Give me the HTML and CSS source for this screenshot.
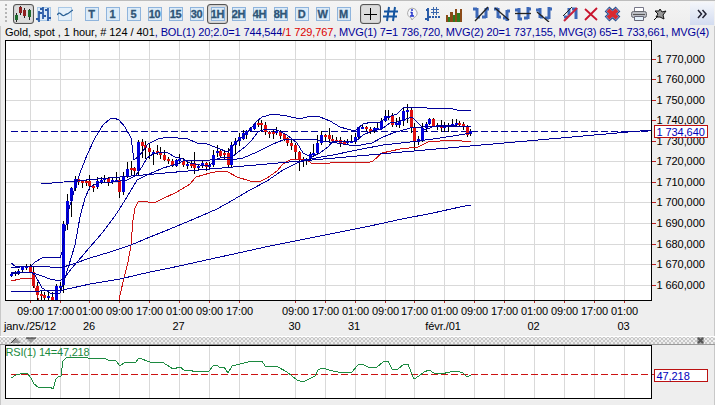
FILE: index.html
```html
<!DOCTYPE html>
<html lang="fr">
<head>
    <meta charset="UTF-8">
    <meta name="viewport" content="width=device-width, initial-scale=1.0">
    <title>Gold, spot</title>
    <link rel="stylesheet" href="styles.css">
</head>
<body>
    <div class="toolbar">
        <span class="grip"></span>
        <div class="group">
            <button class="btn active"><svg width="16" height="16"><path d="M1.5 7v9M5.5 0v9M9.5 2v10M14.5 3v11" stroke="#222"/><path d="M0 9h3v5H0z" fill="#1c6b2c"/><path d="M4 1h3v6H4zM8 4h3v6H8z" fill="#8e1f1f"/><path d="M13 4h3v7h-3z" fill="#1c6b2c"/></svg></button>
            <button class="btn"><svg width="16" height="16"><rect x="1.5" y="1.5" width="13" height="13" fill="#dcebf8" stroke="#a9c8e6"/><path d="M3 5v11M0 13h3M3 7h3M7 1v12M4 3h3M7 10h3M12 2v13M9 4h3M12 12h3" stroke="#2b5ca8" stroke-width="1.800" fill="none"/></svg></button>
            <button class="btn"><svg width="16" height="16"><rect x="1.5" y="1.5" width="13" height="13" fill="#e4f0fa" stroke="#a9c8e6"/><path d="M0 9c2-3 3-2 5 0s3-1 5-1 3-3 6-4" stroke="#2c6296" stroke-width="1.3" fill="none"/></svg></button>
        </div>
        <div class="group">
            <button class="btn"><span class="key">T</span></button>
            <button class="btn"><span class="key">1</span></button>
            <button class="btn"><span class="key">5</span></button>
            <button class="btn"><span class="key">10</span></button>
            <button class="btn"><span class="key">15</span></button>
            <button class="btn"><span class="key">30</span></button>
            <button class="btn active"><span class="key">1H</span></button>
            <button class="btn"><span class="key">2H</span></button>
            <button class="btn"><span class="key">4H</span></button>
            <button class="btn"><span class="key">8H</span></button>
            <button class="btn"><span class="key">D</span></button>
            <button class="btn"><span class="key">W</span></button>
            <button class="btn"><span class="key">M</span></button>
        </div>
        <div class="group">
            <button class="btn active"><svg width="16" height="16"><path d="M8.5 2v12M2 8.5h13" stroke="#000"/></svg></button>
            <button class="btn"><svg width="16" height="16"><path d="M6 1L4 15M12 1l-2 14M1 5.500h14M0 10.500h14" stroke="#1555a0" stroke-width="2"/></svg></button>
            <button class="btn"><svg width="16" height="16"><path d="M8 2a5.500 5 0 0 1 2 9.500L8 14l-1-2.300A5 5 0 0 1 8 2z" fill="#f5f6fa" stroke="#aaa"/><path d="M8 3v2M8 6v4M6.500 6.500h1.500M6 10h4" stroke="#2233cc" stroke-width="1.500" fill="none"/></svg></button>
            <button class="btn"><svg width="16" height="16"><path d="M3 2v13M0 13h3M1 4h2" stroke="#2b5ca8" stroke-width="2"/><path d="M8.500 1v8M11.500 1v8M6 3.500h8M6 6.500h8" stroke="#3a67ac"/><path d="M4 11h12" stroke="#2b5ca8" stroke-width="2" stroke-dasharray="2 1"/></svg></button>
            <button class="btn"><svg width="17" height="16"><path d="M0 9h2v7H0zM4 6h3v10H4zM9 3h2v13H9zM14 3h2v13h-2z" fill="#8b4a18"/><path d="M2 11h2v5H2zM7 9h2v7H7zM11 7h3v9h-3z" fill="#2e7b20"/></svg></button>
        </div>
        <div class="group">
            <button class="btn"><svg width="16" height="16"><path d="M4 2v10M0 3h4M4 11h3M13 2v10M9 11h4M13 3h3" stroke="#3c68b8" stroke-width="3"/><path d="M2 15L15 1" stroke="#222" stroke-width="1.300"/></svg></button>
            <button class="btn"><svg width="16" height="16"><path d="M4 2v10M0 3h4M4 11h3M13 4v11M9 12h4M13 5h3" stroke="#3c68b8" stroke-width="3"/><path d="M1 2l14 12" stroke="#222" stroke-width="1.300"/></svg></button>
            <button class="btn"><svg width="16" height="16"><path d="M4 2v12M0 4h4M4 13h3M13 1v12M9 12h4M13 3h3" stroke="#3c68b8" stroke-width="3"/><path d="M0 7.500h16" stroke="#222" stroke-width="1.300"/></svg></button>
            <button class="btn"><svg width="16" height="16"><path d="M4 2v10M0 4h4M4 11h3M13 1v12M9 12h4M13 3h3" stroke="#3c68b8" stroke-width="3"/><path d="M1 6l12 10" stroke="#222" stroke-width="1.300"/></svg></button>
        </div>
        <div class="group">
            <button class="btn"><svg width="16" height="16"><path d="M2 11h4M7 2v7M14 2v11M10 3h4" stroke="#3c68b8" stroke-width="3"/><path d="M1 10l9-9" stroke="#222"/><path d="M2 15L15 2" stroke="#c8203c" stroke-width="2"/></svg></button>
            <button class="btn"><svg width="16" height="16"><path d="M2 3l12 11M14 2L2 14" stroke="#c8142c" stroke-width="1.800"/></svg></button>
            <button class="btn"><svg width="17" height="16"><path d="M3 3l11 10M14 3L3 13" stroke="#244a88" stroke-width="7"/><path d="M3.500 3.500l10 9M13.500 3.500l-10 9" stroke="#7da0d4" stroke-width="5"/><path d="M4 4l9 8M13 4l-9 8" stroke="#d92a30" stroke-width="4"/></svg></button>
        </div>
        <div class="group">
            <button class="btn"><svg width="16" height="16"><path d="M3.500 1.500h9v5h-9z" fill="#fff" stroke="#778"/><rect x=".5" y="5.500" width="15" height="6" rx="2" fill="#b9bcc2" stroke="#666a70"/><path d="M2 8.500h12" stroke="#555"/><path d="M3.500 10.500h9v4h-9z" fill="#e4f2fa" stroke="#667"/></svg></button>
            <button class="btn"><svg width="16" height="16"><path d="M8 3l2 3 4-1-3 4 1 4-4-2-4 0 2-3-3-3 4 0z" fill="#999" stroke="#111"/><path d="M6 10l-4 4" stroke="#111"/></svg></button>
        </div>
        <button class="more"><svg width="10" height="10"><path d="M1 1l3.500 4L1 9M5.500 1L9 5 5.500 9" stroke="#223" stroke-width="1.500" fill="none"/></svg></button>
    </div>

    <div class="legend">
        <span class="instrument">Gold, spot , 1 hour, # 124 / 401</span>
        <span class="bol">, BOL(1) 20;2.0=1 744,544</span>
        <span class="bol-low">/1 729,767</span>
        <span class="mvg1">, MVG(1) 7=1 736,720</span>
        <span class="mvg2">, MVG(2) 20=1 737,155</span>
        <span class="mvg3">, MVG(3) 65=1 733,661</span>
        <span class="mvg4">, MVG(4)</span>
    </div>

    <svg class="price-chart" id="price" width="715" height="296" viewBox="0 40 715 296">
        <defs><clipPath id="plot"><rect x="6" y="41" width="645" height="259"/></clipPath></defs>
    </svg>

    <div class="splitter">
        <svg class="arrows" width="30" height="8"><path d="M0 6l5-5 5 5z" fill="#999"/><path d="M0 6l5-5" stroke="#444"/><path d="M15 1h10l-5 5z" fill="#999"/><path d="M15 1h10" stroke="#333"/></svg>
        <svg class="close" width="7" height="7"><rect width="7" height="7" fill="#aaa"/><path d="M1 1l5 5M6 1L1 6" stroke="#555" stroke-width="2"/></svg>
    </div>

    <svg class="rsi-chart" id="rsi" width="715" height="60" viewBox="0 345 715 60"></svg>

    <script src="script.js"></script>
</body>
</html>
```
FILE: styles.css
```css
body{
    margin: 0;
    width: 715px;
    height: 405px;
    overflow: hidden;
    box-sizing: border-box;
    background: #eeeeee;
    font-family: "Liberation Sans", Arial, sans-serif;
    font-size: 11px;
    color: #000;
    box-shadow: inset 1px 0 #c8c8c8, inset -1px 0 #c8c8c8;
}

.toolbar{
    display: flex;
    align-items: center;
    height: 26px;
    box-sizing: border-box;
    border-top: 1px solid #bdbdbd;
    padding: 0 1px 0 5px;
    background: linear-gradient(#f4f4f4, #eeeeee);
}
.grip{
    width: 2px;
    height: 20px;
    margin-right: 5.5px;
    background: repeating-linear-gradient(#b5b5b5 0 2px, transparent 2px 4px);
}
.group{
    display: flex;
    margin-right: 5.5px;
}
.btn{
    display: flex;
    align-items: center;
    justify-content: center;
    width: 21px;
    height: 20px;
    padding: 0;
    border: 1px solid transparent;
    background: none;
}
.btn svg{
    flex: none;
}
.btn.active{
    border: 1px solid #555;
    border-radius: 3px;
    background: #dcdcdc;
    box-shadow: inset 0 0 1px #666;
}
.key{
    display: flex;
    justify-content: center;
    width: 12px;
    height: 12px;
    border: 1px solid #8fb4dc;
    background: #dcebf8;
    color: #2f5577;
    font-size: 11px;
    font-weight: bold;
    line-height: 13px;
    letter-spacing: -0.3px;
    -webkit-text-stroke: 0.3px #2f5577;
}
.more{
    display: flex;
    align-items: center;
    justify-content: center;
    width: 24px;
    height: 23px;
    margin-left: auto;
    padding: 0;
    border: 0;
    background: linear-gradient(#f4f6fb, #d3dcf0);
}

.legend{
    display: flex;
    height: 14px;
    padding-left: 5px;
    line-height: 13px;
    white-space: pre;
    letter-spacing: -0.12px;
    color: #000099;
}
.instrument{
    color: #000;
    letter-spacing: -0.04px;
}
.bol-low{
    color: #dd0000;
}

svg{
    display: block;
}
svg text{
    font-size: 11px;
    letter-spacing: -0.08px;
}

.splitter{
    display: flex;
    align-items: center;
    justify-content: space-between;
    height: 9px;
    box-sizing: border-box;
    padding: 0 11px;
    border-top: 1px solid #fff;
    border-bottom: 1px solid #999;
    background-color: #eee;
    background-image: radial-gradient(circle, #999 0.6px, transparent 0.8px), radial-gradient(circle, #999 0.6px, transparent 0.8px);
    background-size: 4px 4px;
    background-position: 0 0, 2px 2px;
}
.axis{
    fill: none;
    stroke: #000;
}
.grid{
    fill: none;
    stroke: #d9d9d9;
}
.tick{
    stroke: #bb2222;
}
.line{
    fill: none;
    stroke: #000099;
}
.line.red{
    stroke: #cc1111;
}
.line.green{
    stroke: #1c8a40;
}
.dash{
    stroke-dasharray: 7 3;
}
.tag{
    fill: #fff;
    stroke: #bb1111;
}
.tag-text{
    fill: #0000bb;
}
.rsi-text{
    fill: #1c8a40;
    letter-spacing: -0.2px;
}
.up{
    fill: #0000dd;
}
.down{
    fill: #e01010;
}
```
FILE: script.js
```js
const NS = 'http://www.w3.org/2000/svg';
const price = document.getElementById('price');
const rsi = document.getElementById('rsi');

const columns = [30, 60, 89, 119, 149, 179, 209, 239, 295, 325, 355, 385, 414, 444, 474, 504, 534, 564, 594, 624];
const hours = ['09:00', '17:00', '01:00'];
const rows = [59, 79, 100, 120, 141, 161, 182, 202, 223, 244, 264, 285];

// x, high, low, body top, body bottom, u = up / d = down
const candles = `11 272 277 274 275 u,15 271 276 272 274 u,18 269 275 271 274 u,22 266 272 267 270 u,26 264 270 266 268 u,
30 264 272 266 272 d,33 267 288 272 286 d,37 282 300 286 295 d,41 291 300 294 296 d,44 292 300 295 298 d,48 292 300 296 297 u,52 292 300 297 300 d,
56 284 300 286 300 u,60 282 292 286 287 u,63 221 293 224 285 u,67 194 230 201 224 u,71 187 217 188 201 u,75 176 191 179 188 u,
78 178 185 179 182 d,82 180 188 181 182 d,86 180 186 181 182 d,89 175 190 181 186 d,93 184 192 186 187 d,97 177 189 181 187 u,
101 177 184 180 181 u,104 175 183 178 180 u,108 177 186 178 182 d,112 178 184 180 182 u,116 172 182 180 181 u,119 178 198 180 192 d,
123 172 195 176 192 u,127 162 178 169 176 u,131 161 175 168 170 d,134 167 175 168 171 d,138 140 175 142 171 u,142 139 158 142 146 d,
145 141 159 145 148 d,149 143 159 148 152 d,153 150 165 152 153 u,157 145 155 151 153 d,160 147 159 152 155 d,164 150 161 155 160 d,
168 157 164 159 161 d,172 159 167 161 166 d,176 159 167 160 166 u,179 154 164 159 161 u,183 158 167 161 165 d,187 161 169 164 165 u,
191 161 168 164 165 d,194 152 174 163 168 d,198 164 170 166 167 u,202 161 168 163 166 u,206 162 171 163 167 d,209 162 169 165 167 u,
213 150 167 155 165 u,217 145 157 151 153 u,220 149 157 151 156 d,224 150 159 153 154 d,228 148 167 153 165 d,231 142 168 145 165 u,
235 138 155 141 145 u,239 133 146 137 141 u,243 130 140 133 139 u,246 130 139 131 135 u,250 127 132 128 131 u,254 123 130 124 129 u,
258 119 127 123 124 d,261 120 132 123 125 d,265 122 135 125 132 d,269 131 138 132 133 d,273 130 139 132 134 d,276 127 135 131 133 u,
280 130 139 132 136 d,284 133 141 134 139 d,287 137 146 138 143 d,291 140 150 143 146 d,295 143 160 145 152 d,299 151 171 152 160 d,
303 157 167 159 160 u,306 158 165 159 160 u,310 152 161 154 159 u,313 144 157 153 154 u,317 135 155 143 153 u,321 131 145 135 143 u,
325 134 142 135 136 d,329 128 143 135 139 d,332 135 143 139 140 d,336 137 143 140 141 d,340 137 147 140 143 d,344 140 145 142 143 d,
347 139 145 141 143 u,351 135 143 141 142 u,355 133 144 137 142 u,358 127 140 127 137 u,362 125 129 127 128 u,366 126 131 127 129 d,
370 127 134 129 132 d,374 127 133 128 130 u,377 123 130 128 129 u,381 118 130 121 129 u,385 110 122 116 121 u,388 110 120 116 117 u,
392 113 127 115 125 d,396 118 127 123 125 u,399 117 128 121 125 u,403 108 126 111 121 u,407 104 123 110 111 u,411 107 133 110 127 d,
414 123 150 127 142 d,418 136 145 139 142 u,422 123 142 128 140 u,426 122 132 124 128 u,429 118 125 119 124 u,433 118 127 119 126 d,
437 123 130 125 126 u,441 120 132 126 128 d,444 122 132 126 127 u,448 123 132 125 127 u,452 119 127 124 125 u,456 119 127 123 125 u,
459 121 127 123 124 d,463 122 130 124 126 d,467 125 137 126 135 d,470 129 136 131 134 u`.split(',');

const lines = {
    upperBand: '11,263 15,266 30,267 35,262 42,258 48,257 60,258 62,252 64,238 68,212 75,188 80,173 87,155 95,138 103,125 110,119 114,118 119,120 125,127 131,138 134,160 140,155 148,144 158,139 168,137 178,138 188,139 197,143 205,143 217,148 228,152 235,143 247,133 257,121 262,117 273,114 287,116 300,119 310,116 320,117 330,121 340,127 347,129 355,131 363,124 372,122 380,122 388,117 397,114 403,108 413,107 427,108 453,109 461,111 466,110 471,111',
    mvg7: '11,274 30,272 35,275 42,288 52,294 60,293 65,278 75,245 80,217 85,198 90,187 100,182 113,182 127,180 135,176 142,167 147,158 153,154 162,152 168,153 175,157 183,159 190,163 200,165 210,165 215,160 222,157 232,157 237,153 245,147 252,140 258,132 265,129 277,130 287,135 297,143 303,153 311,157 320,153 328,147 333,141 347,141 355,142 363,135 372,131 382,129 390,123 397,122 403,120 412,117 417,122 425,130 432,127 440,125 471,127',
    mvg20: '11,272 33,273 42,276 50,279 60,281 65,277 72,268 90,247 103,232 117,213 130,192 137,180 147,175 163,168 177,164 183,161 210,160 237,159 243,158 257,152 273,144 283,140 293,139 310,139 330,142 343,144 355,146 372,143 383,137 393,133 410,128 423,127 437,126 471,127',
    mvg65: '11,268 20,267 40,266 60,268 73,264 90,258 110,252 131,245 150,237 170,229 194,219 217,209 233,200 250,190 267,181 283,170 297,163 310,159 333,155 357,150 383,145 410,142 433,139 453,136 471,133',
    mvg4: '11,292 40,291 63,290 90,284 120,279 150,272 170,268 220,257 270,246 320,236 370,226 402,219 433,213 460,207 471,205',
    trend: '41,184 651,130'
};
const lowerBand = '11,281 20,279 32,278 35,288 40,305 117,305 119,300 123,282 128,262 131,245 133,220 135,208 138,202 142,201 148,202 156,202 162,199 177,192 190,184 196,177 210,173 220,171 228,172 237,177 250,181 259,182 267,178 277,171 283,164 290,160 300,159 308,161 313,164 330,163 350,162 367,163 373,161 382,153 400,149 418,147 428,142 453,140 471,142';
const rsiLine = '11,378 16,375 24,373 27,373 31,378 34,384 38,387 50,387 53,389 56,379 58,377 61,376 63,361 66,358 72,357 86,357 90,359 104,358 108,360 116,361 120,366 125,362 135,363 139,358 150,362 162,362 167,365 173,369 180,367 184,370 190,370 195,372 202,371 209,371 213,366 216,365 221,368 224,367 228,373 232,366 240,364 252,361 262,361 265,366 278,367 287,372 297,380 303,382 309,379 315,376 318,370 322,368 333,371 343,373 352,372 358,365 362,364 370,368 377,367 383,362 388,361 392,369 398,369 404,364 408,364 411,372 414,379 419,376 424,372 429,370 434,373 441,374 450,372 457,371 463,373 467,377 471,375';

function add(parent, tag, attrs, text){
    const el = document.createElementNS(NS, tag);
    for(const key in attrs){
        el.setAttribute(key, attrs[key]);
    }
    if(text) el.textContent = text;
    parent.appendChild(el);
    return el;
}

function drawPrice(){
    add(price, 'rect', {x: 6, y: 41, width: 645, height: 259, fill: '#fff'});
    const plot = add(price, 'g', {'clip-path': 'url(#plot)', 'shape-rendering': 'crispEdges'});
    columns.forEach(x => add(plot, 'path', {d: `M${x + .5} 41V300`, class: 'grid'}));
    rows.forEach(y => add(plot, 'path', {d: `M6 ${y + .5}H651`, class: 'grid'}));
    add(plot, 'path', {d: 'M11 131.5H648', class: 'line dash'});

    candles.forEach(row => {
        const [x, high, low, top, bottom, dir] = row.trim().split(' ');
        add(plot, 'rect', {x: x, y: high, width: 1, height: low - high});
        add(plot, 'rect', {x: x - 1, y: top, width: 3, height: Math.max(bottom - top, 2), class: dir == 'u' ? 'up' : 'down'});
    });
    add(plot, 'polyline', {points: lowerBand, class: 'line red'});
    for(const name in lines){
        add(plot, 'polyline', {points: lines[name], class: 'line'});
    }

    add(price, 'rect', {x: 5.5, y: 40.5, width: 646, height: 260, class: 'axis'});
    rows.forEach((y, i) => {
        add(price, 'path', {d: `M652 ${y + .5}h4`, class: 'tick'});
        add(price, 'text', {x: 656.5, y: y + 4}, `1 ${770 - i * 10},000`);
    });
    columns.forEach((x, i) => {
        add(price, 'path', {d: `M${x + .5} 301v2`, class: 'tick'});
        // the weekend gap drops one 01:00 column
        add(price, 'text', {x: x + .5, y: 315, 'text-anchor': 'middle'}, hours[(i < 8 ? i : i + 1) % 3]);
    });
    [['janv./25/12', 30], ['26', 89], ['27', 178.5], ['30', 294.5], ['31', 354], ['févr./01', 443], ['02', 533.5], ['03', 623.5]]
        .forEach(d => add(price, 'text', {x: d[1], y: 330, 'text-anchor': 'middle'}, d[0]));

    add(price, 'rect', {x: 654.5, y: 125.5, width: 53, height: 12, class: 'tag'});
    add(price, 'text', {x: 656.5, y: 136, class: 'tag-text'}, '1 734,640');
}

function drawRsi(){
    add(rsi, 'rect', {x: 5.5, y: 345.5, width: 646, height: 54, fill: '#fff'});
    columns.forEach(x => add(rsi, 'path', {d: `M${x + .5} 346V399`, class: 'grid'}));
    add(rsi, 'path', {d: 'M11 374.5H651', class: 'line red dash'});
    add(rsi, 'polyline', {points: rsiLine, class: 'line green', 'shape-rendering': 'crispEdges'});
    add(rsi, 'text', {x: 5.5, y: 356, class: 'rsi-text'}, 'RSI(1) 14=47,218');
    add(rsi, 'rect', {x: 5.5, y: 345.5, width: 646, height: 53, class: 'axis'});
    add(rsi, 'path', {d: 'M652 374.5h3', class: 'tick'});
    add(rsi, 'rect', {x: 654.5, y: 369.5, width: 53, height: 12, class: 'tag'});
    add(rsi, 'text', {x: 656.5, y: 380, class: 'tag-text'}, '47,218');
}

drawPrice();
drawRsi();
```
